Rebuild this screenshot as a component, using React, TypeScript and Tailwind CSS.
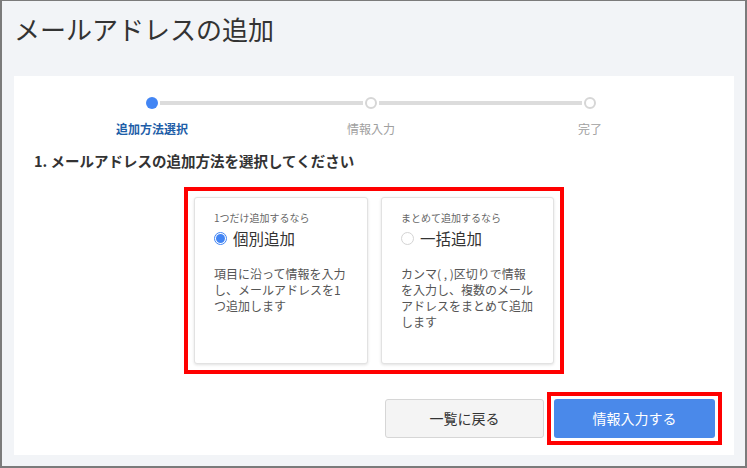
import React from "react";

const font = { fontFamily: '"Noto Sans CJK JP", "Noto Sans", sans-serif' };

function Radio({ checked }: { checked: boolean }) {
  return checked ? (
    <span className="flex h-[13px] w-[13px] items-center justify-center rounded-full border border-[#4285f4] bg-white">
      <span className="h-[9px] w-[9px] rounded-full bg-[#4285f4]" />
    </span>
  ) : (
    <span className="h-[13px] w-[13px] rounded-full border border-[#d4d4d4] bg-white" />
  );
}

function Card({
  hint,
  title,
  desc,
  checked,
  w,
}: {
  hint: string;
  title: string;
  desc: string;
  checked: boolean;
  w: string;
}) {
  return (
    <div
      className={`${w} h-[167px] rounded-[3px] border border-[#e2e2e2] bg-white pl-[19px] pr-[16px] pt-[13px] shadow-[0_1px_3px_rgba(0,0,0,0.12)]`}
    >
      <div className="text-[10px] leading-[13px] text-[#666]">{hint}</div>
      <div className="mt-[3px] flex items-center gap-[6px]">
        <Radio checked={checked} />
        <span className="text-[15.5px] leading-[22px] text-[#333]">{title}</span>
      </div>
      <div className="mt-[17px] text-[12px] leading-[16px] text-[#555]">{desc}</div>
    </div>
  );
}

export default function App() {
  return (
    <div
      style={font}
      className="box-border flex h-[468px] w-[747px] flex-col border-b-2 border-l-2 border-r-2 border-t border-[#7b7b7b] bg-[#f2f4f7]"
    >
      <div className="pl-[12px] pt-[10px] text-[26px] leading-[36px] text-[#333]">
        メールアドレスの追加
      </div>
      <div className="ml-[12px] mr-[11px] mt-[29px] flex h-[379px] flex-col bg-white">
        {/* stepper */}
        <div className="ml-[90px] mt-[21px] w-[534px]">
          <div className="flex items-center px-[42px]">
            <span className="h-[12px] w-[12px] rounded-full bg-[#4285f4]" />
            <span className="mx-[2px] h-[4px] flex-1 bg-[#dcdcdc]" />
            <span className="h-[12px] w-[12px] rounded-full border-2 border-[#d6d6d6] bg-white" />
            <span className="mx-[2px] h-[4px] flex-1 bg-[#dcdcdc]" />
            <span className="h-[12px] w-[12px] rounded-full border-2 border-[#d6d6d6] bg-white" />
          </div>
          <div className="mt-[12px] flex justify-between text-[12px] leading-[16px]">
            <span className="w-[96px] text-center font-bold text-[#1e5ea8]">追加方法選択</span>
            <span className="w-[96px] text-center text-[#a0a0a0]">情報入力</span>
            <span className="w-[96px] text-center text-[#a0a0a0]">完了</span>
          </div>
        </div>
        <div className="ml-[20px] mt-[14px] text-[14.5px] font-bold leading-[20px] text-[#333]">
          1. メールアドレスの追加方法を選択してください
        </div>
        <div className="mt-[16px] flex justify-center">
          <div className="flex gap-[13px] border-4 border-[#ff0000] p-[6px]">
            <Card
              w="w-[174px]"
              hint="1つだけ追加するなら"
              title="個別追加"
              desc="項目に沿って情報を入力し、メールアドレスを1つ追加します"
              checked
            />
            <Card
              w="w-[173px]"
              hint="まとめて追加するなら"
              title="一括追加"
              desc="カンマ( , )区切りで情報を入力し、複数のメールアドレスをまとめて追加します"
              checked={false}
            />
          </div>
        </div>
        <div className="mt-[18px] flex items-center justify-end pr-[12px]">
          <button className="h-[39px] w-[159px] rounded-[3px] border border-[#d6d6d6] bg-[#f4f4f4] text-[14px] text-[#333]">
            一覧に戻る
          </button>
          <div className="ml-[3px] border-4 border-[#ff0000] p-[3px]">
            <button className="block h-[39px] w-[161px] rounded-[3px] bg-[#4a89ea] text-[14px] text-white">
              情報入力する
            </button>
          </div>
        </div>
      </div>
    </div>
  );
}
